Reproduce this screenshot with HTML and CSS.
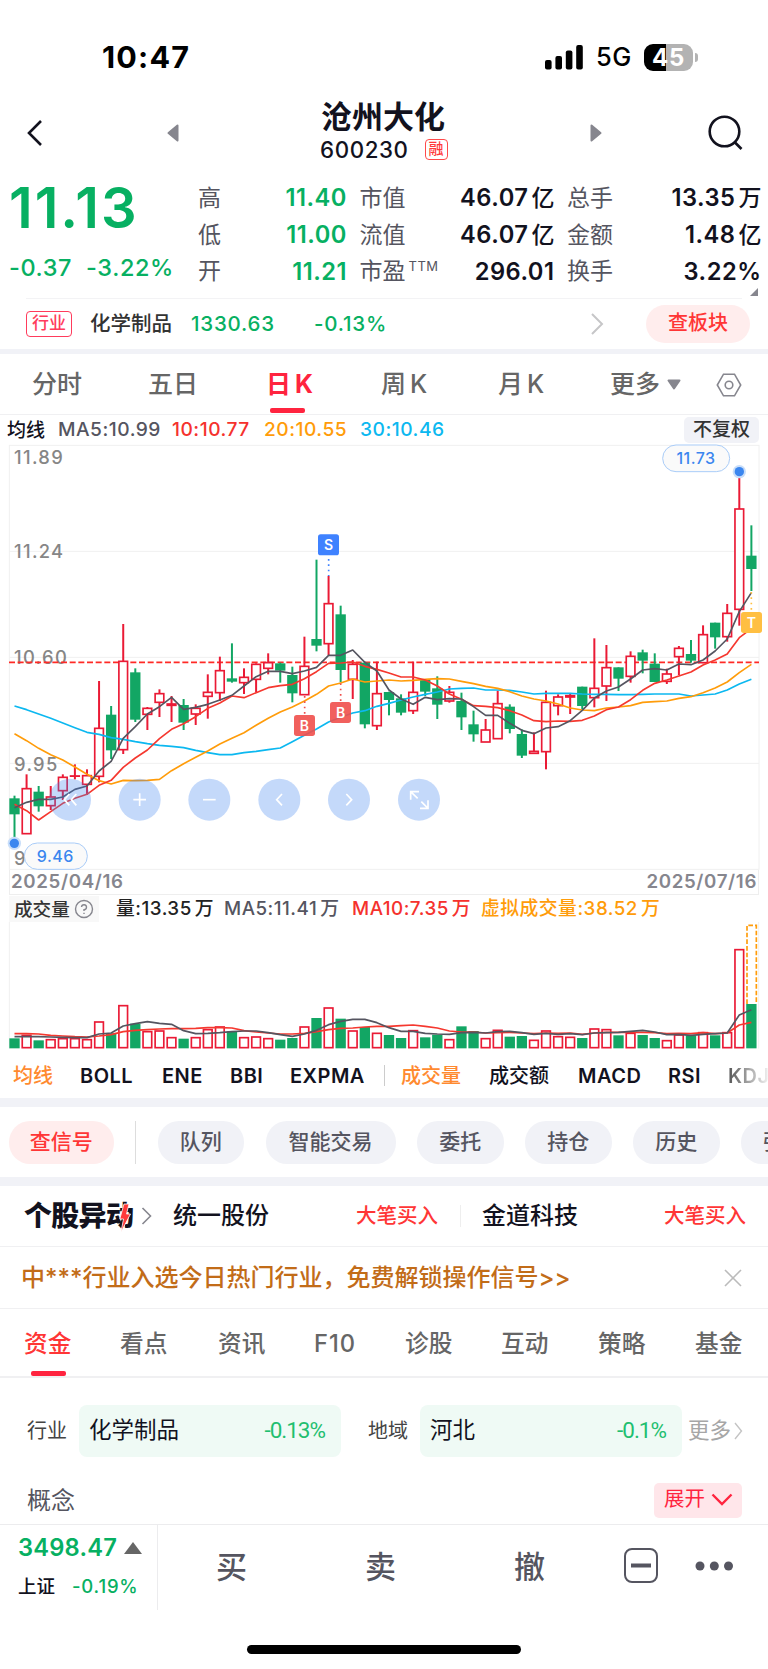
FILE: index.html
```html
<!DOCTYPE html>
<html lang="zh-CN">
  <head>
    <meta charset="UTF-8" />
    <meta name="viewport" content="width=device-width, initial-scale=1.0" />
    <title>沧州大化 600230</title>
    <link rel="stylesheet" href="styles.css">
  </head>
  <body>
    <div class="status-bar">
      <span class="clock">10:47</span>
      <svg class="signal" width="38" height="25" viewBox="0 0 38 25">
        <rect x="0" y="15" width="6.6" height="9.5" rx="2" />
        <rect x="10.4" y="11" width="6.6" height="13.5" rx="2" />
        <rect x="20.8" y="5.6" width="6.6" height="18.9" rx="2" />
        <rect x="31.2" y="0" width="6.6" height="24.5" rx="2" />
      </svg>
      <span class="network">5G</span>
      <span class="battery">45</span>
      <span class="battery-cap"></span>
    </div>

    <header class="stock-header">
      <svg class="back" width="17" height="28" viewBox="0 0 17 28"><path d="M15 2 L3 14 L15 26" /></svg>
      <svg class="arrow" width="12" height="18" viewBox="0 0 12 18"><path d="M10.5 1.5 L1.5 9 L10.5 16.5 Z" /></svg>
      <div class="stock-title">
        <h1>沧州大化</h1>
        <div class="stock-code">600230 <span class="margin-tag">融</span></div>
      </div>
      <svg class="arrow" width="12" height="18" viewBox="0 0 12 18"><path d="M1.5 1.5 L10.5 9 L1.5 16.5 Z" /></svg>
      <svg class="search" width="36" height="36" viewBox="0 0 36 36"><circle cx="16.5" cy="16.5" r="14.8" /><path d="M27 27.5 L33.5 34" /></svg>
    </header>

    <section class="quote">
      <div class="price-box">
        <div class="price">11.13</div>
        <div class="change"><span>-0.37</span><span>-3.22%</span></div>
      </div>
      <div class="stats">
        <span>高</span><b class="down">11.40</b><span>市值</span><b>46.07<i>亿</i></b><span>总手</span><b>13.35<i>万</i></b>
        <span>低</span><b class="down">11.00</b><span>流值</span><b>46.07<i>亿</i></b><span>金额</span><b>1.48<i>亿</i></b>
        <span>开</span><b class="down">11.21</b><span>市盈<sup>TTM</sup></span><b>296.01</b><span>换手</span><b>3.22%</b>
      </div>
      <span class="corner"></span>
    </section>

    <section class="industry">
      <span class="industry-tag">行业</span>
      <span class="industry-name">化学制品</span>
      <span class="down idx">1330.63</span>
      <span class="down idx">-0.13%</span>
      <svg width="14" height="22" viewBox="0 0 14 22"><path d="M2 1 L12 11 L2 21" /></svg>
      <span class="board-btn">查板块</span>
    </section>

    <nav class="k-tabs">
      <span>分时</span>
      <span>五日</span>
      <span class="active">日<i>K</i></span>
      <span>周<i>K</i></span>
      <span>月<i>K</i></span>
      <span>更多</span>
      <svg class="caret" width="14" height="11" viewBox="0 0 14 11"><path d="M1.5 1.5 H12.5 L7 9.5 Z" /></svg>
      <svg class="hex" width="26" height="24" viewBox="0 0 26 24"><path d="M7.5 1.2 H18.5 L24.7 12 L18.5 22.8 H7.5 L1.3 12 Z" /><circle cx="13" cy="12" r="3.8" /></svg>
    </nav>

    <div class="ma-row">
      <span class="ma-name">均线</span>
      <span class="c-dark">MA5:10.99</span>
      <span class="c-red">10:10.77</span>
      <span class="c-orange">20:10.55</span>
      <span class="c-blue">30:10.46</span>
      <span class="adjust">不复权</span>
    </div>

    <!-- unités du graphique : 3 par pixel -->
    <svg class="price-chart" viewBox="0 15 2304 1275">
      <g class="grid">
        <rect x="28" y="16" width="2249" height="1272" />
        <path d="M28 334 H2277 M28 652 H2277 M28 970 H2277" />
      </g>
      <g class="axis">
        <text x="42" y="72">11.89</text>
        <text x="42" y="354">11.24</text>
        <text x="42" y="673">10.60</text>
        <text x="42" y="992">9.95</text>
        <text x="42" y="1275">9</text>
      </g>
      <path class="level" d="M27 667 H2277" />
      <g id="candles"></g>
      <g id="priceLines"></g>
      <g class="signals">
        <path class="dots s" d="M986 357 V408" />
        <rect class="s" x="954" y="283" width="63" height="63" rx="8" />
        <text x="986" y="330">S</text>
        <path class="dots b" d="M914 768 V822" />
        <rect class="b" x="882" y="825" width="63" height="63" rx="8" />
        <text x="913" y="873">B</text>
        <path class="dots b" d="M1022 730 V784" />
        <rect class="b" x="990" y="786" width="63" height="63" rx="8" />
        <text x="1022" y="833">B</text>
        <path class="dots t" d="M2254 456 V514" />
        <rect class="t" x="2223" y="516" width="63" height="63" rx="8" />
        <text x="2254" y="563">T</text>
      </g>
      <g class="marks">
        <circle class="halo" cx="43" cy="1210" r="20" /><circle cx="43" cy="1210" r="14" />
        <circle class="halo" cx="2218" cy="95" r="20" /><circle cx="2218" cy="95" r="14" />
        <rect x="73" y="1209" width="189" height="79" rx="39" /><text x="166" y="1267">9.46</text>
        <rect x="1988" y="15" width="201" height="80" rx="40" /><text x="2088" y="73">11.73</text>
      </g>
      <g class="tools">
        <circle cx="210" cy="1079" r="63" /><path d="M208 1062 L193 1079 L208 1096 M229 1062 L214 1079 L229 1096" />
        <circle cx="419" cy="1079" r="63" /><path d="M400 1079 H438 M419 1060 V1098" />
        <circle cx="628" cy="1079" r="63" /><path d="M609 1079 H647" />
        <circle cx="838" cy="1079" r="63" /><path d="M846 1062 L830 1079 L846 1096" />
        <circle cx="1047" cy="1079" r="63" /><path d="M1039 1062 L1055 1079 L1039 1096" />
        <circle cx="1257" cy="1079" r="63" /><path d="M1232 1079 V1055 H1257 M1232 1055 L1253 1075 M1284 1081 V1105 H1260 M1284 1105 L1264 1085" />
      </g>
    </svg>

    <div class="date-row"><span>2025/04/16</span><span>2025/07/16</span></div>

    <div class="vol-row">
      <span class="vol-name">成交量
        <svg width="20" height="20" viewBox="0 0 20 20"><circle cx="10" cy="10" r="8.5" /><path d="M7.5 8 A2.5 2.5 0 1 1 10 10.7 V12" /><path d="M10 13.8 V15" /></svg>
      </span>
      <span class="c-black">量:13.35<i>万</i></span>
      <span class="c-dark">MA5:11.41<i>万</i></span>
      <span class="c-red">MA10:7.35<i>万</i></span>
      <span class="c-orange">虚拟成交量:38.52<i>万</i></span>
    </div>
    <svg class="vol-chart" viewBox="0 186 2304 381">
      <path class="grid" d="M28 186 V566 M2276 186 V566" />
      <path class="virtual" d="M2241 432 V196 H2269 V432" />
      <g id="volumes"></g>
      <g id="volumeLines"></g>
    </svg>

    <nav class="indicators">
      <span class="on">均线</span>
      <span>BOLL</span>
      <span>ENE</span>
      <span>BBI</span>
      <span>EXPMA</span>
      <span class="sep"></span>
      <span class="on">成交量</span>
      <span class="cn">成交额</span>
      <span>MACD</span>
      <span>RSI</span>
      <span class="fade">KDJ</span>
    </nav>

    <div class="chips">
      <span class="chip chip-red">查信号</span>
      <span class="chip-sep"></span>
      <span class="chip">队列</span>
      <span class="chip chip-wide">智能交易</span>
      <span class="chip">委托</span>
      <span class="chip">持仓</span>
      <span class="chip">历史</span>
      <span class="chip">强弱</span>
    </div>

    <div class="movers">
      <span class="movers-logo">个股异动
        <svg width="12" height="30" viewBox="0 0 12 30"><path d="M5 1 H10 L7.5 11 H11.5 L2 29 L4.5 16 H0.8 Z" /></svg>
      </span>
      <svg class="chev" width="11" height="18" viewBox="0 0 11 18"><path d="M1.5 1 L9.5 9 L1.5 17" /></svg>
      <span class="mover">统一股份</span>
      <span class="buy">大笔买入</span>
      <span class="mover-sep"></span>
      <span class="mover">金道科技</span>
      <span class="buy">大笔买入</span>
    </div>

    <div class="notice">
      <span>中***行业入选今日热门行业，免费解锁操作信号&gt;&gt;</span>
      <svg width="18" height="18" viewBox="0 0 18 18"><path d="M1 1 L17 17 M17 1 L1 17" /></svg>
    </div>

    <nav class="info-tabs">
      <span class="active">资金</span>
      <span>看点</span>
      <span>资讯</span>
      <span>F10</span>
      <span>诊股</span>
      <span>互动</span>
      <span>策略</span>
      <span>基金</span>
    </nav>

    <section class="sectors">
      <span class="label">行业</span>
      <div class="sector"><span>化学制品</span><em>-0.13%</em></div>
      <span class="label">地域</span>
      <div class="sector"><span>河北</span><em>-0.1%</em></div>
      <span class="more">更多<svg width="9" height="20" viewBox="0 0 9 20"><path d="M1 2 L7.5 10 L1 18" /></svg></span>
    </section>

    <section class="concept">
      <span>概念</span>
      <span class="expand">展开<svg width="22" height="13" viewBox="0 0 22 13"><path d="M1.5 1.5 L11 11 L20.5 1.5" /></svg></span>
    </section>

    <footer class="bottom-bar">
      <div class="index-box">
        <div class="index-value">3498.47<span class="up-mark"></span></div>
        <div class="index-name"><span>上证</span><span class="down idx">-0.19%</span></div>
      </div>
      <span class="trade">买</span>
      <span class="trade">卖</span>
      <span class="trade">撤</span>
      <svg class="minus" width="34" height="35" viewBox="0 0 34 35"><rect x="1" y="1" width="32" height="33" rx="7" /><path d="M7 17.5 H27" /></svg>
      <svg class="dots3" width="40" height="10" viewBox="0 0 40 10"><circle cx="5" cy="5" r="4.5" /><circle cx="19.3" cy="5" r="4.5" /><circle cx="33.5" cy="5" r="4.5" /></svg>
    </footer>
    <div class="home-bar"></div>

    <script src="chart.js"></script>
  </body>
</html>
```

FILE: styles.css
```css
* {
  margin: 0;
  padding: 0;
  box-sizing: border-box;
}

body {
  width: 768px;
  height: 1669px;
  overflow: hidden;
  background-color: #ffffff;
  color: #12121e;
  font-family: Inter, "Noto Sans CJK SC", sans-serif;
  font-weight: 500;
  line-height: 1;
  white-space: nowrap;
}

i,
em {
  font-style: normal;
}

svg {
  display: block;
  fill: none;
}

.down {
  color: #07b062;
}

.idx {
  letter-spacing: 0.8px;
}

.c-black {
  color: #222222;
}

.c-dark {
  color: #555560;
}

.c-red {
  color: #f5322d;
}

.c-orange {
  color: #ff9c0a;
}

.c-blue {
  color: #0cb8f0;
}

/* barre de statut */
.status-bar {
  display: flex;
  align-items: center;
  height: 95px;
  padding: 19px 0 0 102px;
  color: #000000;
}

.clock {
  width: 443px;
  font-size: 30.5px;
  font-weight: 700;
  letter-spacing: 1.2px;
}

.signal {
  fill: #000000;
  margin-right: 13px;
}

.network {
  width: 48px;
  font-size: 25.5px;
  letter-spacing: 0.6px;
}

.battery {
  width: 49px;
  height: 27px;
  border-radius: 9px;
  background: linear-gradient(90deg, #000000 45%, #b3b3b3 45%);
  color: #ffffff;
  font-size: 24px;
  font-weight: 700;
  line-height: 27px;
  text-align: center;
  letter-spacing: 0.6px;
}

.battery-cap {
  width: 3px;
  height: 9px;
  margin-left: 2px;
  border-radius: 0 3px 3px 0;
  background-color: #b3b3b3;
}

/* en-tête */
.stock-header {
  display: grid;
  grid-template-columns: 141px 139px 284px 118px 36px;
  align-items: center;
  height: 76px;
  padding-left: 26px;
}

.back,
.search {
  stroke: #12121e;
  stroke-width: 2.6;
}

.arrow {
  fill: #86868e;
  stroke: #86868e;
  stroke-width: 2;
  stroke-linejoin: round;
}

.stock-title {
  padding: 0 0 4px 15px;
}

.stock-title h1 {
  font-size: 31px;
  font-weight: 700;
}

.stock-code {
  display: flex;
  align-items: center;
  margin: 7px 0 0 -1px;
  font-size: 22.3px;
  letter-spacing: 0.6px;
}

.margin-tag {
  width: 23px;
  height: 21px;
  margin-left: 16px;
  border: 1.5px solid #ff4a4a;
  border-radius: 4px;
  color: #ff3a3a;
  font-size: 15px;
  line-height: 17px;
  text-align: center;
  letter-spacing: 0;
}

/* cotation */
.quote {
  position: relative;
  display: flex;
  height: 128px;
}

.quote::after {
  content: "";
  position: absolute;
  left: 26px;
  right: 26px;
  bottom: 0;
  height: 1px;
  background-color: #f3f3f5;
}

.price-box {
  width: 198px;
  padding: 9px 0 0 9px;
  color: #07b062;
}

.price {
  font-size: 56px;
  font-weight: 600;
  letter-spacing: 2px;
}

.change {
  display: flex;
  gap: 14px;
  margin-top: 20px;
  font-size: 23.5px;
  letter-spacing: 0.6px;
}

.stats {
  display: grid;
  grid-template-columns: 60px 89px 80px 127.5px 80px 127px;
  grid-template-rows: repeat(3, 36.7px);
  align-items: center;
  height: 110px;
  margin-top: 9px;
  font-size: 23px;
  color: #555560;
  font-weight: 400;
}

.stats > span:nth-child(6n + 3),
.stats > span:nth-child(6n + 5) {
  padding-left: 12.5px;
}

.stats b {
  color: #12121e;
  font-size: 23.7px;
  font-weight: 600;
  letter-spacing: 0.5px;
  text-align: right;
}

.stats b i {
  margin-left: 3px;
  font-weight: 500;
  font-size: 23px;
  letter-spacing: 0;
}

.stats b.down {
  color: #07b062;
}

.stats sup {
  font-size: 13px;
  letter-spacing: 0.5px;
  margin-left: 3px;
  line-height: 0;
}

.corner {
  position: absolute;
  right: 10px;
  bottom: 3px;
  border: 4.5px solid;
  border-color: transparent #86868e #86868e transparent;
}

/* secteur */
.industry {
  display: grid;
  grid-template-columns: 64px 101px 123px 276px 56px 104px;
  align-items: center;
  height: 55px;
  padding: 5px 0 5px 26px;
  border-bottom: 5px solid #f1f2f7;
  font-size: 20.5px;
}

.industry svg {
  stroke: #c6c6c8;
  stroke-width: 2;
}

.industry-tag {
  width: 46px;
  height: 26px;
  border: 1.5px solid #ff3b5c;
  border-radius: 4px;
  color: #ff3b5c;
  font-size: 17px;
  line-height: 22px;
  text-align: center;
}

.industry-name {
  color: #333333;
}

.board-btn {
  height: 38px;
  border-radius: 19px;
  background-color: #ffeded;
  color: #ff3636;
  font-size: 20px;
  line-height: 37px;
  text-align: center;
}

/* onglets K */
.k-tabs {
  display: grid;
  grid-template-columns: 116px 118px 115px 117px 112px 57px 49px 26px;
  align-items: center;
  height: 61px;
  padding: 1px 0 0 32px;
  border-bottom: 1px solid #f0f0f2;
  color: #666666;
  font-size: 25px;
}

.k-tabs i {
  margin-left: 4px;
}

.k-tabs .active {
  position: relative;
  color: #ff243f;
  font-weight: 700;
}

.k-tabs .active::after {
  content: "";
  position: absolute;
  left: 4px;
  top: 36px;
  width: 35px;
  height: 5px;
  border-radius: 2px;
  background-color: #ff243f;
}

.caret {
  fill: #86868e;
  stroke: #86868e;
  stroke-width: 2;
  stroke-linejoin: round;
}

.hex {
  stroke: #86868e;
  stroke-width: 1.6;
}

.ma-row {
  display: grid;
  grid-template-columns: 51px 114px 92px 96px 324px 75px;
  align-items: center;
  height: 30px;
  padding-left: 7px;
  font-size: 19.2px;
  letter-spacing: 0.5px;
}

.ma-name {
  font-size: 19px;
  letter-spacing: 0;
}

.adjust {
  height: 26px;
  border-radius: 5px;
  background-color: #f1f2f7;
  color: #333333;
  font-size: 19px;
  line-height: 26px;
  text-align: center;
  letter-spacing: 0;
}

/* graphiques */
.price-chart {
  width: 768px;
  height: 425px;
  overflow: visible;
}

.vol-chart {
  width: 768px;
  height: 127px;
}

.grid,
.grid rect {
  stroke: #f0f0f0;
  stroke-width: 3;
}

.axis text {
  fill: #868686;
  font-size: 55px;
  letter-spacing: 4px;
}

.level {
  stroke: #ff2a26;
  stroke-width: 5;
  stroke-dasharray: 18 8;
}

.up-bar {
  fill: #ffffff;
  stroke: #ea1a35;
  stroke-width: 5;
}

.up-wick {
  stroke: #ea1a35;
  stroke-width: 6;
}

.down-bar {
  fill: #12a664;
}

.down-wick {
  stroke: #12a664;
  stroke-width: 6;
}

.line {
  stroke-width: 5;
  stroke-linejoin: round;
}

.signals text {
  fill: #ffffff;
  font-size: 42px;
  font-weight: 600;
  text-anchor: middle;
}

.signals rect.s {
  fill: #3f82ff;
}

.signals rect.b {
  fill: #ef4f4b;
  fill-opacity: 0.9;
}

.signals rect.t {
  fill: #ffbf42;
}

.dots {
  stroke-width: 5;
  stroke-dasharray: 5 11;
}

.dots.s {
  stroke: #3f82ff;
}

.dots.b {
  stroke: #ef4f4b;
}

.dots.t {
  stroke: #ffbf42;
}

.marks circle {
  fill: #3b86ef;
}

.marks .halo {
  fill: #c9def9;
}

.marks rect {
  fill: #fafafa;
  stroke: #a9ccf8;
  stroke-width: 3;
}

.marks text {
  fill: #3b86ef;
  font-size: 48px;
  letter-spacing: 1.5px;
  text-anchor: middle;
}

.tools circle {
  fill: #3c82f0;
  fill-opacity: 0.3;
}

.tools path {
  stroke: #ffffff;
  stroke-width: 5;
}

.virtual {
  stroke: #ff9c0a;
  stroke-width: 5;
  stroke-dasharray: 14 6;
}

.date-row {
  display: flex;
  justify-content: space-between;
  align-items: center;
  height: 25px;
  margin: 0 9px;
  padding: 1px 1px 0;
  border: 1px solid #eeeeee;
  border-top: none;
  color: #86868e;
  font-size: 18.7px;
  font-weight: 600;
  letter-spacing: 0.65px;
}

.vol-row {
  display: grid;
  grid-template-columns: 107px 108px 128px 129px 180px;
  align-items: center;
  height: 27px;
  margin-left: 9px;
  padding-top: 1px;
  font-size: 18.8px;
  letter-spacing: 0.5px;
}

.vol-row i {
  margin-left: 3px;
}

.vol-name {
  display: flex;
  align-items: center;
  gap: 4px;
  width: 90px;
  height: 26px;
  padding-left: 5px;
  background-color: #f8f8f8;
  color: #333333;
  font-size: 18.6px;
  letter-spacing: 0;
}

.vol-name svg {
  stroke: #86868e;
  stroke-width: 1.4;
}

.indicators {
  display: grid;
  grid-template-columns: 67px 82px 68px 60px 94px 17px 88px 89px 90px 60px 40px;
  align-items: center;
  height: 58px;
  padding: 4px 0 0 13px;
  border-bottom: 9px solid #f1f2f7;
  font-size: 20px;
  font-weight: 600;
  letter-spacing: 0.5px;
}

.indicators .on {
  color: #ff8a30;
  font-weight: 500;
  letter-spacing: 0;
}

.indicators .cn {
  font-weight: 500;
  letter-spacing: 0;
}

.sep {
  width: 1px;
  height: 21px;
  background-color: #cccccc;
}

.indicators .fade {
  overflow: hidden;
  background: linear-gradient(90deg, #555555, #ffffff 44px);
  background-clip: text;
  color: transparent;
}

/* boutons */
.chips {
  display: flex;
  align-items: center;
  height: 79px;
  padding-left: 9px;
  gap: 21.5px;
  overflow: hidden;
  border-bottom: 9px solid #f1f2f7;
}

.chip {
  flex-shrink: 0;
  width: 86.5px;
  height: 43px;
  border-radius: 21px;
  background-color: #f1f2f7;
  color: #555560;
  font-size: 21px;
  line-height: 42px;
  text-align: center;
}

.chip-wide {
  width: 130px;
}

.chip-red {
  width: 104.5px;
  background-color: #ffeded;
  color: #ff3636;
}

.chip-sep {
  flex-shrink: 0;
  width: 1px;
  height: 43px;
  background-color: #dddddd;
}

.movers {
  display: grid;
  grid-template-columns: 117px 32px 183px 104px 22px 182px 90px;
  align-items: center;
  height: 61px;
  padding-left: 24px;
  border-bottom: 1px solid #f0f0f2;
  font-size: 24px;
}

.movers-logo {
  position: relative;
  font-size: 28px;
  font-weight: 900;
  letter-spacing: -0.7px;
}

.movers-logo svg {
  position: absolute;
  left: 95px;
  top: 1px;
  fill: #ff3a3a;
  stroke: #ffffff;
  stroke-width: 0.8;
}

.chev {
  stroke: #86868e;
  stroke-width: 1.6;
}

.buy {
  color: #ff3636;
  font-size: 20.5px;
}

.mover-sep {
  width: 1px;
  height: 22px;
  background-color: #eeeeee;
}

.notice {
  display: flex;
  justify-content: space-between;
  align-items: center;
  height: 62px;
  padding: 0 26px 0 21px;
  border-bottom: 1px solid #f0f0f2;
  color: #c26c18;
  font-size: 24px;
}

.notice svg {
  stroke: #bbbbbb;
  stroke-width: 1.6;
}

.info-tabs {
  display: grid;
  grid-template-columns: 96px 98px 96px 91px 96px 97px 97px 50px;
  align-items: center;
  height: 69px;
  padding: 2px 0 0 24px;
  border-bottom: 2px solid #f0f0f2;
  color: #666666;
  font-size: 23.7px;
}

.info-tabs .active {
  position: relative;
  color: #ff3636;
}

.info-tabs .active::after {
  content: "";
  position: absolute;
  left: 7px;
  top: 39px;
  width: 35px;
  height: 5px;
  border-radius: 2px;
  background-color: #ff243f;
}

.info-tabs span:nth-child(4) {
  letter-spacing: 1px;
}

.sectors {
  display: grid;
  grid-template-columns: 52px 262px 27px 52px 262px 6px 60px;
  align-items: center;
  height: 105px;
  padding-left: 27px;
  font-size: 20px;
  font-weight: 400;
}

.sectors .label {
  color: #444444;
}

.sectors .label:nth-child(3) {
  grid-column: 4;
}

.sector {
  display: flex;
  justify-content: space-between;
  align-items: center;
  height: 52px;
  padding: 0 16px 0 10px;
  border-radius: 8px;
  background-color: #effaf5;
  font-size: 22.5px;
}

.sector em {
  color: #1fbf70;
  font-family: Roboto, sans-serif;
  font-size: 22.5px;
  letter-spacing: -1px;
}

.more {
  grid-column: 7;
  display: flex;
  align-items: center;
  gap: 3px;
  color: #a6a6a6;
  font-size: 21.5px;
}

.more svg {
  stroke: #c4c4c4;
  stroke-width: 1.4;
}

.concept {
  display: flex;
  justify-content: space-between;
  align-items: center;
  height: 41px;
  padding: 0 26px 6px 27px;
  color: #555560;
  font-size: 24px;
  font-weight: 400;
}

.expand {
  display: flex;
  align-items: center;
  gap: 6px;
  height: 35px;
  padding: 0 9px 2px 10px;
  border-radius: 5px;
  background-color: #ffe6ea;
  color: #ff243f;
  font-size: 20.5px;
}

.expand svg {
  stroke: #ff243f;
  stroke-width: 2.4;
}

/* barre du bas */
.bottom-bar {
  display: grid;
  grid-template-columns: 216px 149px 149px 110px 71px 50px;
  align-items: center;
  height: 86px;
  border-top: 1px solid #ececee;
}

.index-box {
  width: 158px;
  height: 85px;
  padding: 11px 0 0 18px;
  border-right: 1px solid #ececee;
}

.index-value {
  display: flex;
  align-items: center;
  color: #07b062;
  font-size: 23.7px;
  font-weight: 600;
  letter-spacing: 0.2px;
}

.up-mark {
  margin-left: 7px;
  border: 9px solid transparent;
  border-top: none;
  border-bottom: 12px solid #666666;
}

.index-name {
  display: flex;
  gap: 17px;
  margin-top: 17px;
  font-size: 18.5px;
}

.trade {
  padding-bottom: 3px;
  color: #555560;
  font-size: 31px;
}

.minus,
.dots3 {
  margin-bottom: 4px;
}

.minus {
  stroke: #555560;
  stroke-width: 2;
}

.minus path {
  stroke-width: 4;
}

.dots3 {
  fill: #555560;
}

.home-bar {
  width: 274px;
  height: 9px;
  margin: 35px auto 0;
  border-radius: 5px;
  background-color: #000000;
}
```

FILE: chart.js
```js
const STEP = 36.24;
const FIRST = 43.5;
const UP_W = 26;
const DOWN_W = 31;

// sens, haut, corps haut, corps bas, bas
const candles = [
  ["g", 1067, 1075, 1123, 1205], ["r", 1003, 1046, 1181, 1181], ["g", 1038, 1055, 1099, 1115],
  ["r", 1038, 1071, 1097, 1110], ["r", 1003, 1012, 1052, 1080], ["r", 973, 1008, 1008, 1018],
  ["r", 988, 1007, 1033, 1065], ["r", 723, 865, 1009, 1027], ["g", 798, 824, 931, 957],
  ["r", 552, 664, 929, 942], ["g", 685, 697, 839, 846], ["r", 801, 805, 823, 870],
  ["r", 748, 761, 787, 831], ["r", 768, 792, 796, 846], ["g", 777, 795, 848, 870],
  ["r", 793, 805, 822, 855], ["r", 703, 757, 769, 836], ["r", 650, 692, 758, 783],
  ["g", 610, 715, 725, 728], ["r", 685, 712, 728, 762], ["r", 670, 673, 718, 757],
  ["r", 640, 668, 685, 703], ["g", 668, 670, 692, 728], ["g", 680, 705, 760, 787],
  ["r", 590, 679, 764, 764], ["g", 359, 597, 617, 634], ["r", 408, 491, 611, 645],
  ["g", 497, 523, 690, 727], ["r", 660, 673, 718, 777], ["g", 665, 668, 853, 865],
  ["r", 665, 761, 857, 870], ["g", 755, 756, 780, 826], ["g", 763, 775, 818, 826],
  ["r", 665, 757, 812, 822], ["g", 718, 720, 755, 768], ["g", 709, 745, 794, 837],
  ["r", 738, 757, 783, 788], ["g", 758, 783, 832, 870], ["g", 812, 853, 883, 905],
  ["r", 837, 870, 906, 906], ["r", 752, 791, 896, 896], ["g", 793, 800, 867, 880],
  ["g", 868, 882, 947, 954], ["r", 877, 934, 940, 940], ["r", 752, 787, 935, 988],
  ["r", 763, 771, 797, 826], ["r", 762, 767, 771, 822], ["g", 740, 740, 798, 808],
  ["r", 595, 745, 773, 802], ["r", 615, 683, 738, 783], ["g", 682, 682, 716, 753],
  ["r", 634, 649, 709, 728], ["g", 629, 637, 662, 700], ["g", 640, 671, 726, 726],
  ["r", 686, 702, 724, 732], ["r", 618, 625, 650, 705], ["g", 600, 642, 662, 668],
  ["r", 556, 584, 668, 668], ["g", 548, 548, 592, 626], ["r", 492, 520, 590, 605],
  ["r", 100, 207, 508, 557], ["g", 256, 347, 387, 453]
];

const priceLines = {
  "#555560": [1103, 1087, 1078, 1078, 1071, 1048, 1038, 993, 964, 895, 860, 822, 800, 772, 808, 802, 793, 780, 766, 738, 710, 694, 694, 701, 693, 682, 646, 646, 630, 667, 693, 750, 777, 793, 772, 779, 776, 777, 800, 826, 826, 850, 871, 881, 864, 860, 842, 811, 774, 753, 741, 717, 690, 686, 690, 672, 674, 660, 633, 597, 515, 458],
  "#f5382f": [1093, 1112, 1140, 1115, 1090, 1075, 1063, 1036, 1021, 982, 954, 930, 896, 868, 851, 830, 805, 789, 768, 773, 758, 743, 737, 733, 716, 695, 670, 669, 666, 679, 688, 699, 711, 711, 720, 738, 762, 778, 797, 799, 803, 812, 825, 842, 845, 843, 844, 841, 828, 809, 801, 779, 751, 730, 720, 708, 696, 675, 660, 642, 593, 566],
  "#ff9c0a": [881, 902, 925, 944, 960, 981, 1003, 1022, 1032, 1021, 1022, 1021, 1018, 992, 971, 952, 933, 912, 895, 878, 856, 835, 816, 801, 783, 763, 738, 729, 717, 726, 723, 720, 723, 721, 718, 716, 717, 724, 731, 739, 745, 755, 768, 777, 783, 792, 804, 810, 812, 804, 801, 797, 787, 785, 783, 775, 770, 758, 744, 726, 698, 673],
  "#0cb8f0": [798, 809, 822, 835, 849, 863, 877, 883, 893, 898, 905, 911, 916, 919, 923, 931, 938, 944, 944, 938, 934, 929, 924, 905, 886, 867, 846, 832, 819, 812, 799, 790, 780, 771, 763, 756, 747, 745, 744, 750, 750, 751, 756, 762, 760, 760, 760, 762, 763, 763, 764, 764, 763, 762, 762, 762, 768, 765, 762, 750, 732, 718]
};

const volumes = [535, 525, 541, 538, 535, 535, 538, 485, 520, 436, 491, 514, 512, 532, 536, 532, 508, 500, 514, 532, 530, 535, 539, 534, 500, 474, 443, 476, 512, 501, 519, 525, 534, 511, 532, 524, 538, 499, 513, 535, 510, 530, 528, 540, 512, 529, 531, 534, 506, 508, 526, 519, 525, 534, 541, 524, 526, 517, 526, 517, 268, 432];

const volumeLines = {
  "#555560": [530, 530, 530, 531, 532, 533, 533, 522, 519, 498, 491, 485, 490, 493, 512, 521, 520, 518, 515, 513, 513, 518, 524, 529, 522, 511, 494, 484, 478, 478, 488, 503, 514, 514, 520, 522, 523, 518, 517, 519, 515, 514, 518, 523, 520, 523, 521, 524, 519, 518, 517, 514, 511, 516, 524, 523, 526, 523, 521, 519, 465, 449],
  "#f5382f": [521, 521, 522, 526, 528, 530, 531, 528, 524, 515, 511, 509, 507, 506, 506, 505, 503, 503, 504, 512, 516, 519, 522, 522, 520, 515, 509, 505, 504, 501, 499, 499, 497, 495, 499, 504, 513, 516, 516, 519, 518, 517, 519, 521, 519, 520, 519, 523, 519, 517, 517, 517, 517, 518, 521, 520, 521, 518, 521, 519, 495, 487]
};

function xAt(i) {
  return FIRST + i * STEP;
}

function bar(kind, i, top, bottom) {
  const w = kind === "r" ? UP_W : DOWN_W;
  const cls = kind === "r" ? "up-bar" : "down-bar";
  return `<rect class="${cls}" x="${xAt(i) - w / 2}" y="${top}" width="${w}" height="${Math.max(bottom - top, 0.5)}" />`;
}

function drawLines(id, lines) {
  document.getElementById(id).innerHTML = Object.entries(lines)
    .reverse()
    .map(([color, ys]) => {
      const points = ys.map((y, i) => `${xAt(i)},${y}`).join(" ");
      return `<polyline class="line" stroke="${color}" points="${points}" />`;
    })
    .join("");
}

document.getElementById("candles").innerHTML = candles
  .map(([kind, high, top, bottom, low], i) => {
    const cls = kind === "r" ? "up-wick" : "down-wick";
    return `<path class="${cls}" d="M${xAt(i)} ${high} V${low}" />` + bar(kind, i, top, bottom);
  })
  .join("");

document.getElementById("volumes").innerHTML = volumes
  .map((top, i) => {
    const kind = candles[i][0];
    return kind === "r" ? bar(kind, i, top + 1, 563) : bar(kind, i, top, 565);
  })
  .join("");

drawLines("priceLines", priceLines);
drawLines("volumeLines", volumeLines);
```
